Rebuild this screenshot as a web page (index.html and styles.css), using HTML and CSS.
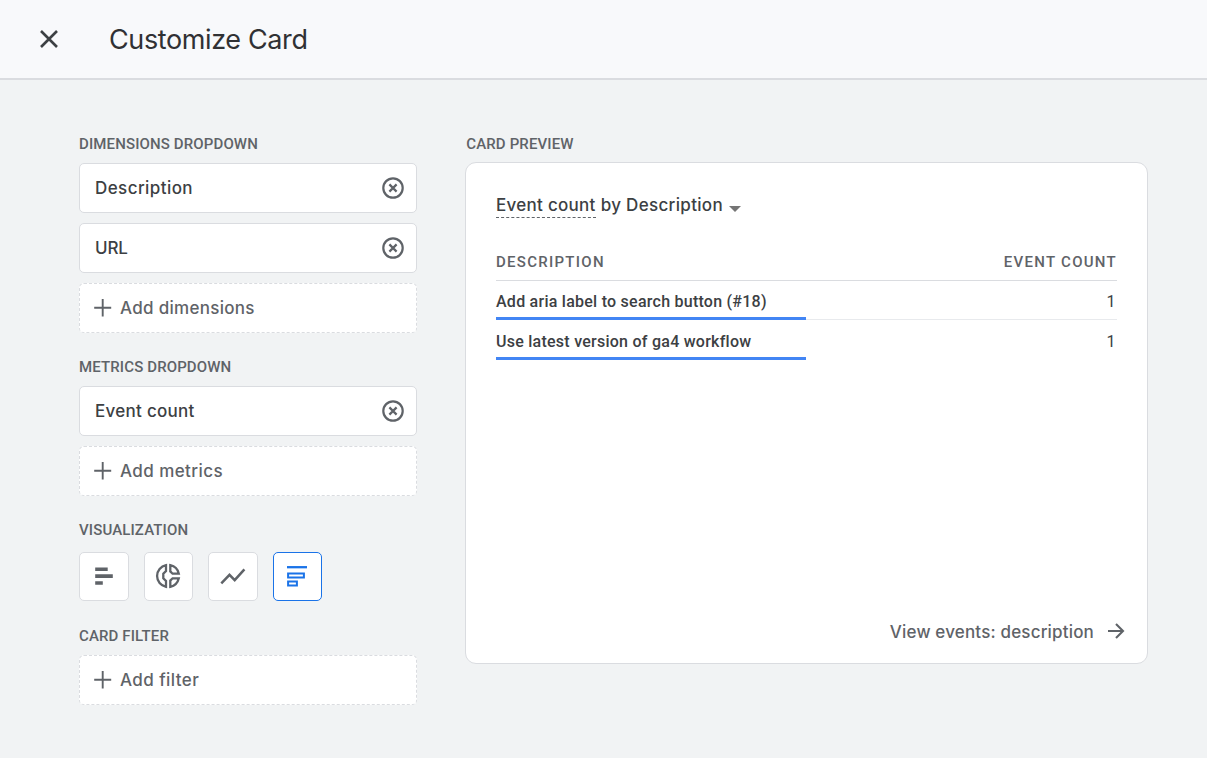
FILE: index.html
```html
<!DOCTYPE html>
<html lang="en">
<head>
<meta charset="utf-8">
<title>Customize Card</title>
<link rel="stylesheet" href="styles.css">
</head>
<body>
<svg class="defs" width="0" height="0">
  <symbol id="remove" viewBox="0 0 22 22"><circle cx="11" cy="11" r="9.7" fill="none" stroke="currentColor" stroke-width="2.2"/><path d="M7.4 7.4l7.2 7.2M14.6 7.4l-7.2 7.2" stroke="currentColor" stroke-width="2.2"/></symbol>
  <symbol id="plus" viewBox="0 0 18 18"><path d="M8.7 0v17.5M.2 8.7h17" stroke="currentColor" stroke-width="1.9"/></symbol>
</svg>
<header class="header">
  <svg class="close" viewBox="0 0 20 20"><path d="M2 2l16 16M18 2L2 18" stroke="currentColor" stroke-width="2.6"/></svg>
  <h1 class="title">Customize Card</h1>
</header>
<main class="main">
  <section class="settings">
    <h2 class="label">DIMENSIONS DROPDOWN</h2>
    <div class="stack">
      <div class="field"><span class="t-desc">Description</span><svg class="remove"><use href="#remove"/></svg></div>
      <div class="field"><span class="t-url">URL</span><svg class="remove"><use href="#remove"/></svg></div>
      <div class="field add"><svg class="plus"><use href="#plus"/></svg><span class="t-dims">Add dimensions</span></div>
    </div>
    <h2 class="label">METRICS DROPDOWN</h2>
    <div class="stack">
      <div class="field"><span class="t-count">Event count</span><svg class="remove"><use href="#remove"/></svg></div>
      <div class="field add"><svg class="plus"><use href="#plus"/></svg><span class="t-metrics">Add metrics</span></div>
    </div>
    <h2 class="label">VISUALIZATION</h2>
    <div class="tiles">
      <div class="tile"><svg viewBox="0 0 24 24"><path d="M3.2 3.5h12.5v3.6H3.2zM3.2 10.2h17.6v3.9H3.2zM3.2 17.2h7.6v3.6H3.2z" fill="currentColor"/></svg></div>
      <div class="tile"><svg viewBox="0 0 26 26"><path d="M11 2.2A11 11 0 0 0 11 23.8V18L8.3 15.2V10.8L11 8ZM15.3 2.2V8.4L17.6 10.7H23.8A11.2 11.2 0 0 0 15.3 2.2ZM15.3 23.8V17.6L17.6 15.3H23.8A11.2 11.2 0 0 1 15.3 23.8Z" fill="none" stroke="currentColor" stroke-width="2.3"/></svg></div>
      <div class="tile"><svg viewBox="0 0 26 26"><path d="M1.3 20.3l8.2-8.4 5.2 5.2L24.4 6.3" fill="none" stroke="currentColor" stroke-width="2.5"/></svg></div>
      <div class="tile selected"><svg viewBox="0 0 24 24"><path d="M2 3.2h20" stroke="currentColor" stroke-width="2.3"/><path d="M3.1 9.5h15.8v4.1H3.1zM3.1 17.4h8.8v4.1H3.1z" fill="none" stroke="currentColor" stroke-width="2"/></svg></div>
    </div>
    <h2 class="label">CARD FILTER</h2>
    <div class="stack">
      <div class="field add"><svg class="plus"><use href="#plus"/></svg><span class="t-filter">Add filter</span></div>
    </div>
  </section>
  <section class="preview">
    <h2 class="label">CARD PREVIEW</h2>
    <article class="card">
      <div class="card-title"><span class="metric t-count">Event count</span><span class="t-by">by Description</span><svg class="caret" viewBox="0 0 12 6"><path d="M0 0h12L6 6z" fill="#757575"/></svg></div>
      <div class="table">
        <div class="row head"><span>DESCRIPTION</span><span>EVENT COUNT</span></div>
        <div class="row"><span class="name">Add aria label to search button (#18)</span><span class="value">1</span></div>
        <div class="row"><span class="name">Use latest version of ga4 workflow</span><span class="value">1</span></div>
      </div>
      <div class="more"><span class="t-view">View events: description</span><svg class="arrow" viewBox="0 0 18 18"><path d="M1 9h14.5M9 2l7 7-7 7" fill="none" stroke="currentColor" stroke-width="2.1"/></svg></div>
    </article>
  </section>
</main>
</body>
</html>
```

FILE: styles.css
```css
* { box-sizing: border-box; }
body { margin: 0; height: 758px; overflow: hidden; background: #f1f3f4; color: #3c4043; font-family: Inter, "Liberation Sans", sans-serif; }
svg { flex: none; }
.defs { display: block; width: 0; height: 0; }
.header { display: flex; align-items: center; height: 80px; padding-left: 39px; background: #f8f9fb; border-bottom: 2px solid #dadce0; }
.close { width: 20px; height: 20px; color: #3c4043; }
.title { margin: 0 0 0 50px; padding-top: 2px; font-size: 27px; line-height: 34px; font-weight: 400; letter-spacing: -.38px; color: #303134; }
.main { display: flex; gap: 48px; padding: 54px 0 0 79px; }
.settings { width: 338px; }
.label { margin: 0; height: 29px; font: 500 15px/20px Roboto, sans-serif; letter-spacing: .13px; color: #5f6368; }
.stack { display: grid; gap: 10px; margin-bottom: 24px; }
.field { display: flex; align-items: center; justify-content: space-between; height: 50px; padding: 0 12px 0 15px; background: #fff; border: 1px solid #dadce0; border-radius: 5px; font-size: 17px; font-weight: 500; }
.add { justify-content: flex-start; gap: 8px; padding-left: 14px; border-style: dashed; color: #5f6368; }
.t-desc { letter-spacing: .42px; }
.t-url { letter-spacing: -.2px; }
.t-dims { letter-spacing: .29px; }
.t-count { letter-spacing: .28px; }
.t-metrics, .t-filter { letter-spacing: .42px; }
.t-by { letter-spacing: .32px; }
.t-view { letter-spacing: .17px; }
.remove { width: 22px; height: 22px; margin-top: .5px; color: #5f6368; }
.plus { width: 18px; height: 18px; }
.label:has(+ .tiles) { height: 32px; }
.tiles { display: flex; gap: 15.33px; margin-bottom: 25px; }
.tile { display: grid; place-items: center; width: 49.33px; height: 49px; padding-bottom: 1px; background: #fff; border: 1px solid #dadce0; border-radius: 5px; color: #5f6368; }
.tile svg { width: 26px; height: 26px; }
.tile:first-child { width: 50px; margin-right: -.67px; }
.tile:first-child svg, .selected svg { width: 24px; height: 24px; }
.selected { padding: 0 1px 2px 0; border-color: #1a73e8; color: #1a73e8; }
.preview { width: 683px; }
.preview .label { height: 28px; padding-left: 1.3px; }
.card { display: flex; flex-direction: column; height: 502px; padding: 30px 30px 20px; background: #fff; border: 1px solid #dadce0; border-radius: 11px; }
.card-title { display: flex; height: 25px; font-size: 17px; line-height: 24px; font-weight: 500; }
.metric { border-bottom: 1px dashed #5f6368; margin-right: 5px; }
.caret { width: 12px; height: 6px; margin: 13px 0 0 6px; }
.table { margin-top: 26px; font-family: Roboto, sans-serif; font-size: 16px; }
.row { display: flex; justify-content: space-between; height: 39px; border-bottom: 1px solid #e8eaed; line-height: 42px; margin-bottom: 1px; }
.head { height: 37px; border-color: #dadce0; color: #5f6368; font-size: 15px; font-weight: 500; letter-spacing: 1.28px; line-height: 36px; margin-bottom: 0; }
.row:last-child { border: 0; }
.name { width: 310px; height: 39px; border-bottom: 3px solid #4285f4; font-weight: 500; letter-spacing: .25px; }
.value { padding-right: 1.5px; }
.more { display: flex; justify-content: flex-end; align-items: center; gap: 13px; height: 24px; margin: auto -8px 0 0; color: #5f6368; font-size: 17px; font-weight: 500; }
.t-view { padding-top: 2px; }
.arrow { width: 18px; height: 18px; }
```
